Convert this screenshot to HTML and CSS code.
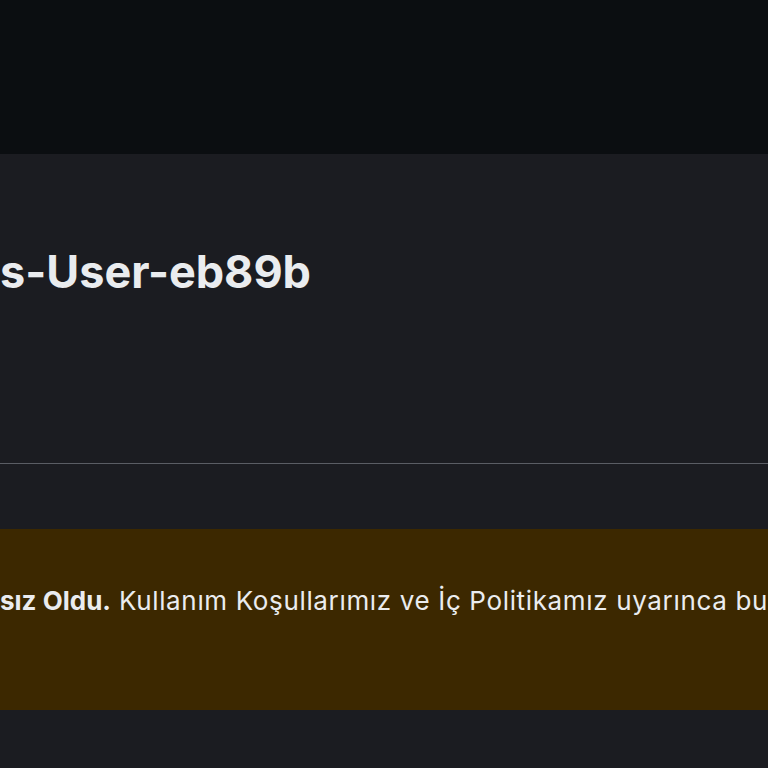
FILE: index.html
```html
<!DOCTYPE html>
<html lang="tr">
<head>
<meta charset="utf-8">
<link rel="stylesheet" href="styles.css">
</head>
<body>
<header class="topbar"></header>
<section class="profile">
  <h1 class="title">s-User-eb89b</h1>
</section>
<div class="divider"></div>
<div class="gap"></div>
<div class="banner">
  <p class="banner-text"><strong>sız Oldu.</strong> Kullanım Koşullarımız ve İç Politikamız uyarınca bu</p>
</div>
<div class="rest"></div>
</body>
</html>
```

FILE: styles.css
```css
* { box-sizing: border-box; }
html, body {
  margin: 0;
  padding: 0;
  width: 768px;
  height: 768px;
  overflow: hidden;
  background: #1b1c21;
  font-family: Inter, "Noto Sans", "Liberation Sans", sans-serif;
  color: #eaecef;
}
.topbar {
  height: 154px;
  background: #0b0e11;
}
.profile {
  height: 309px;
  padding-top: 88px;
}
.title {
  margin: 0;
  font-size: 45px;
  line-height: 60px;
  font-weight: 700;
  white-space: nowrap;
}
.divider {
  height: 1px;
  background: #5a5d64;
}
.gap {
  height: 65px;
}
.banner {
  height: 181px;
  background: #3c2800;
  padding-top: 54px;
}
.banner-text {
  margin: 0;
  font-size: 26px;
  line-height: 36px;
  white-space: nowrap;
  overflow: hidden;
  letter-spacing: 0.65px;
}
.banner-text strong {
  font-weight: 700;
  letter-spacing: 0;
}
.rest { height: 58px; }
```
